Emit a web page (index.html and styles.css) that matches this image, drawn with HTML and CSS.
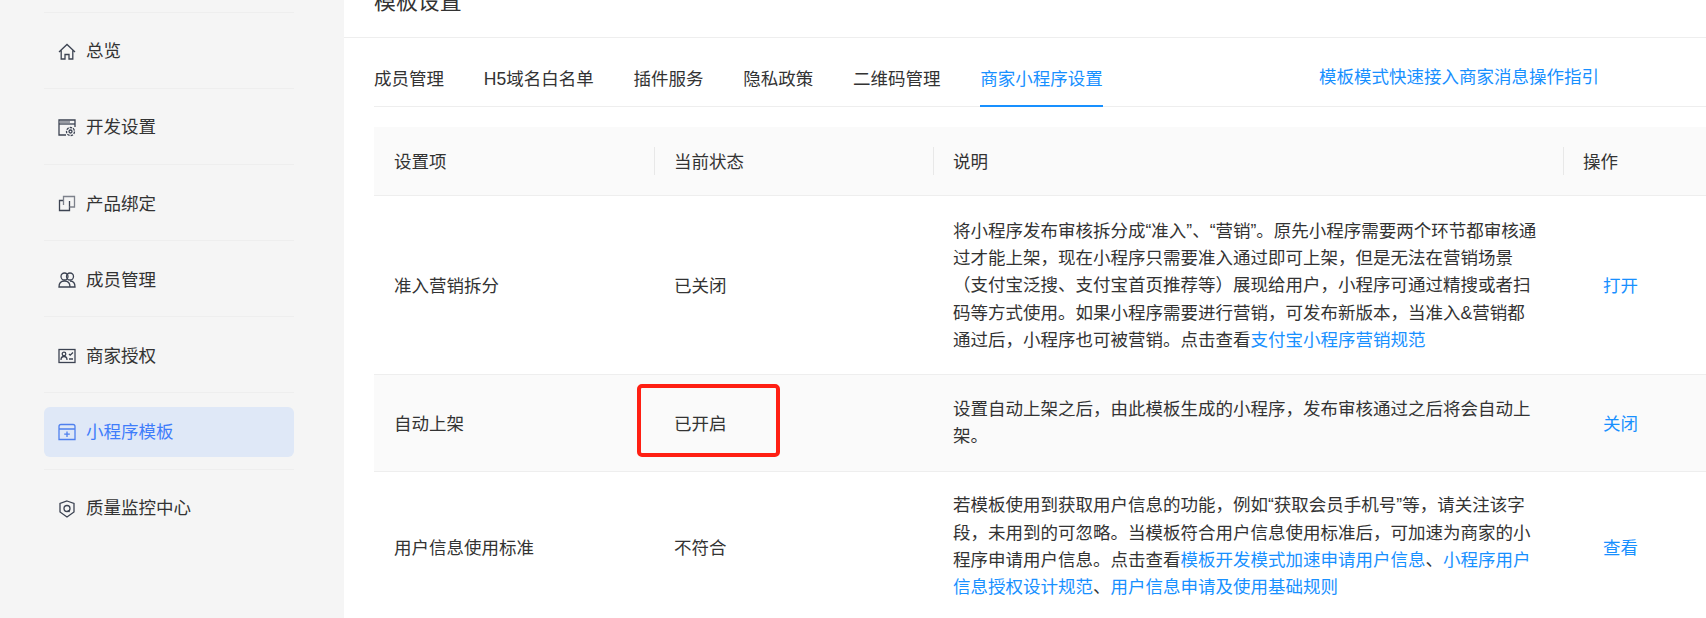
FILE: index.html
```html
<!DOCTYPE html>
<html lang="zh-CN">
<head>
<meta charset="utf-8">
<title>模板设置</title>
<link rel="stylesheet" href="styles.css">
</head>
<body>
<div class="app">
  <nav class="sidebar">
    <a class="nav-item"><span class="nav-inner">
      <svg class="nav-icon" viewBox="0 0 18 18"><path d="M1 9 9 1.5 17 9M3.2 7.5V16H7v-4.5h4V16h3.800V7.500"/></svg>总览</span></a>
    <a class="nav-item"><span class="nav-inner">
      <svg class="nav-icon" viewBox="0 0 18 18"><path d="M8 16H1V1h16v7"/><path d="M1 5h16" /><path class="thick" d="M2 3h10"/><circle cx="12.500" cy="12.500" r="1.500"/><circle cx="12.500" cy="12.500" r="4" stroke-dasharray="2.500 1"/></svg>开发设置</span></a>
    <a class="nav-item"><span class="nav-inner">
      <svg class="nav-icon" viewBox="0 0 18 18"><path d="M5.500 5.500H1.500V15.500H11.500V6"/><path class="pale" d="M5.500 10V1.500H16.500V12H11.500"/></svg>产品绑定</span></a>
    <a class="nav-item"><span class="nav-inner">
      <svg class="nav-icon" viewBox="0 0 18 18"><circle cx="6.500" cy="5.500" r="3.500"/><circle cx="12" cy="5.500" r="3.500"/><path d="M1 16c0-4 2-6 5.500-6s5.500 2 5.500 6ZM12 10c3 0 5 2 5 6h-5"/></svg>成员管理</span></a>
    <a class="nav-item"><span class="nav-inner">
      <svg class="nav-icon" viewBox="0 0 18 18"><rect x="1" y="2.500" width="16" height="13"/><circle cx="6" cy="7" r="1.800"/><path d="M3 13c0-2.500 1-3.500 3-3.500s3 1 3 3.500M11 7l1.200 1.200L15 5.500M11 12h4"/></svg>商家授权</span></a>
    <a class="nav-item is-active"><span class="nav-inner">
      <svg class="nav-icon" viewBox="0 0 18 18"><path d="M1 6V3.500Q1 1.500 3 1.500h12q2 0 2 2V6M1 6v10.500h16V6ZM9 8.500v5.500M6.200 11.200h5.600"/></svg>小程序模板</span></a>
    <a class="nav-item"><span class="nav-inner">
      <svg class="nav-icon" viewBox="0 0 18 18"><path d="M9 1 16 3.500V12L9 17 2 12V3.500Z"/><circle cx="9" cy="8.500" r="3"/><path d="m10 10.500 1.500 1.500"/></svg>质量监控中心</span></a>
  </nav>
  <main class="main">
    <header class="page-header"><h1 class="page-title">模板设置</h1></header>
    <div class="tabs">
      <a class="tab">成员管理</a>
      <a class="tab">H5域名白名单</a>
      <a class="tab">插件服务</a>
      <a class="tab">隐私政策</a>
      <a class="tab">二维码管理</a>
      <a class="tab is-active">商家小程序设置</a>
      <a class="tab-guide">模板模式快速接入商家消息操作指引</a>
    </div>
    <table class="settings">
      <colgroup><col class="col-a"><col class="col-b"><col class="col-c"><col></colgroup>
      <thead>
        <tr><th>设置项</th><th><span class="sep"></span>当前状态</th><th><span class="sep"></span>说明</th><th><span class="sep"></span>操作</th></tr>
      </thead>
      <tbody>
        <tr class="lead">
          <td class="single">准入营销拆分</td>
          <td class="single">已关闭</td>
          <td>将小程序发布审核拆分成“准入”、“营销”。原先小程序需要两个环节都审核通过才能上架，现在小程序只需要准入通过即可上架，但是无法在营销场景（支付宝泛搜、支付宝首页推荐等）展现给用户，小程序可通过精搜或者扫码等方式使用。如果小程序需要进行营销，可发布新版本，当准入&amp;营销都通过后，小程序也可被营销。点击查看<a class="link">支付宝小程序营销规范</a></td>
          <td class="single op"><a class="link">打开</a></td>
        </tr>
        <tr class="alt">
          <td class="single">自动上架</td>
          <td class="single marked">已开启<span class="red-mark"></span></td>
          <td>设置自动上架之后，由此模板生成的小程序，发布审核通过之后将会自动上架。</td>
          <td class="single op"><a class="link">关闭</a></td>
        </tr>
        <tr>
          <td class="single">用户信息使用标准</td>
          <td class="single">不符合</td>
          <td>若模板使用到获取用户信息的功能，例如“获取会员手机号”等，请关注该字段，未用到的可忽略。当模板符合用户信息使用标准后，可加速为商家的小程序申请用户信息。点击查看<a class="link">模板开发模式加速申请用户信息</a>、<a class="link">小程序用户信息授权设计规范</a>、<a class="link">用户信息申请及使用基础规则</a></td>
          <td class="single op"><a class="link">查看</a></td>
        </tr>
      </tbody>
    </table>
  </main>
</div>
</body>
</html>
```
FILE: styles.css
```css
* { box-sizing: border-box; }
html, body { margin: 0; height: 100%; overflow: hidden; background: #fff; }
body {
  font-family: "Liberation Sans", "Noto Sans CJK SC", sans-serif;
  font-size: 17.5px;
  line-height: 27.34px;
  color: #333;
}
.app { display: flex; height: 618px; }

.sidebar {
  flex: 0 0 344px;
  background: #f5f5f5;
  padding: 12px 50px 0 44px;
  display: flex;
  flex-direction: column;
}
.nav-item {
  display: block;
  height: 76.1px;
  padding-top: 14px;
  border-top: 1px solid #eeeeee;
}
.nav-inner {
  display: flex;
  align-items: center;
  height: 50px;
  padding-left: 14px;
  border-radius: 6px;
}
.nav-icon {
  width: 18px;
  height: 18px;
  margin-right: 10px;
  flex: none;
  fill: none;
  stroke: #3c4352;
  stroke-width: 1.300;
}
.nav-icon .thick { stroke: #9a9da5; stroke-width: 2; }
.nav-icon .pale { stroke: #7d818b; }
.is-active .nav-inner { background: #dfe8f7; color: #3f7dfb; }
.is-active .nav-icon { stroke: #4f80ee; }

.main { flex: 1; min-width: 0; padding-left: 30px; }
.page-header {
  height: 38px;
  margin-left: -30px;
  padding: 0 0 20px 30px;
  border-bottom: 1px solid #eeeeee;
  display: flex;
  align-items: flex-end;
}
.page-title {
  margin: 0;
  font-size: 21.9px;
  line-height: 30px;
  font-weight: 400;
  flex: none;
}

.tabs {
  display: flex;
  align-items: flex-start;
  gap: 39.8px;
  height: 69px;
  padding-top: 28px;
  border-bottom: 1px solid #eeeeee;
}
.tab { height: 41px; flex: none; }
.tab.is-active {
  color: #1890ff;
  border-bottom: 2px solid #1890ff;
}
.tab-guide {
  margin-left: auto;
  margin-right: 107px;
  margin-top: -2px;
  color: #1890ff;
}

.settings {
  width: 100%;
  margin-top: 20px;
  border-collapse: collapse;
  table-layout: fixed;
}
.col-a { width: 280px; }
.col-b { width: 279px; }
.col-c { width: 630px; }
.settings th {
  position: relative;
  height: 68px;
  padding: 4px 20px 0;
  background: #fafafa;
  border-bottom: 1px solid #eeeeee;
  font-weight: 400;
  text-align: left;
}
.sep {
  position: absolute;
  left: 0;
  top: 20px;
  width: 1px;
  height: 28px;
  background: #e8e8e8;
}
.settings td {
  padding: 20.5px 21px 20.5px 20px;
  border-bottom: 1px solid #eeeeee;
  vertical-align: middle;
}
.settings .lead td { padding-top: 22px; padding-bottom: 20px; }
.settings td.single { padding-top: 24px; }
.alt td { background: #fafafa; }
.settings td.op { padding-left: 40px; }
.link { color: #1890ff; }
.marked { position: relative; }
.red-mark {
  position: absolute;
  left: -17px;
  top: 9px;
  width: 143px;
  height: 73px;
  border: 4px solid #ff1f13;
  border-radius: 5px;
}
```
